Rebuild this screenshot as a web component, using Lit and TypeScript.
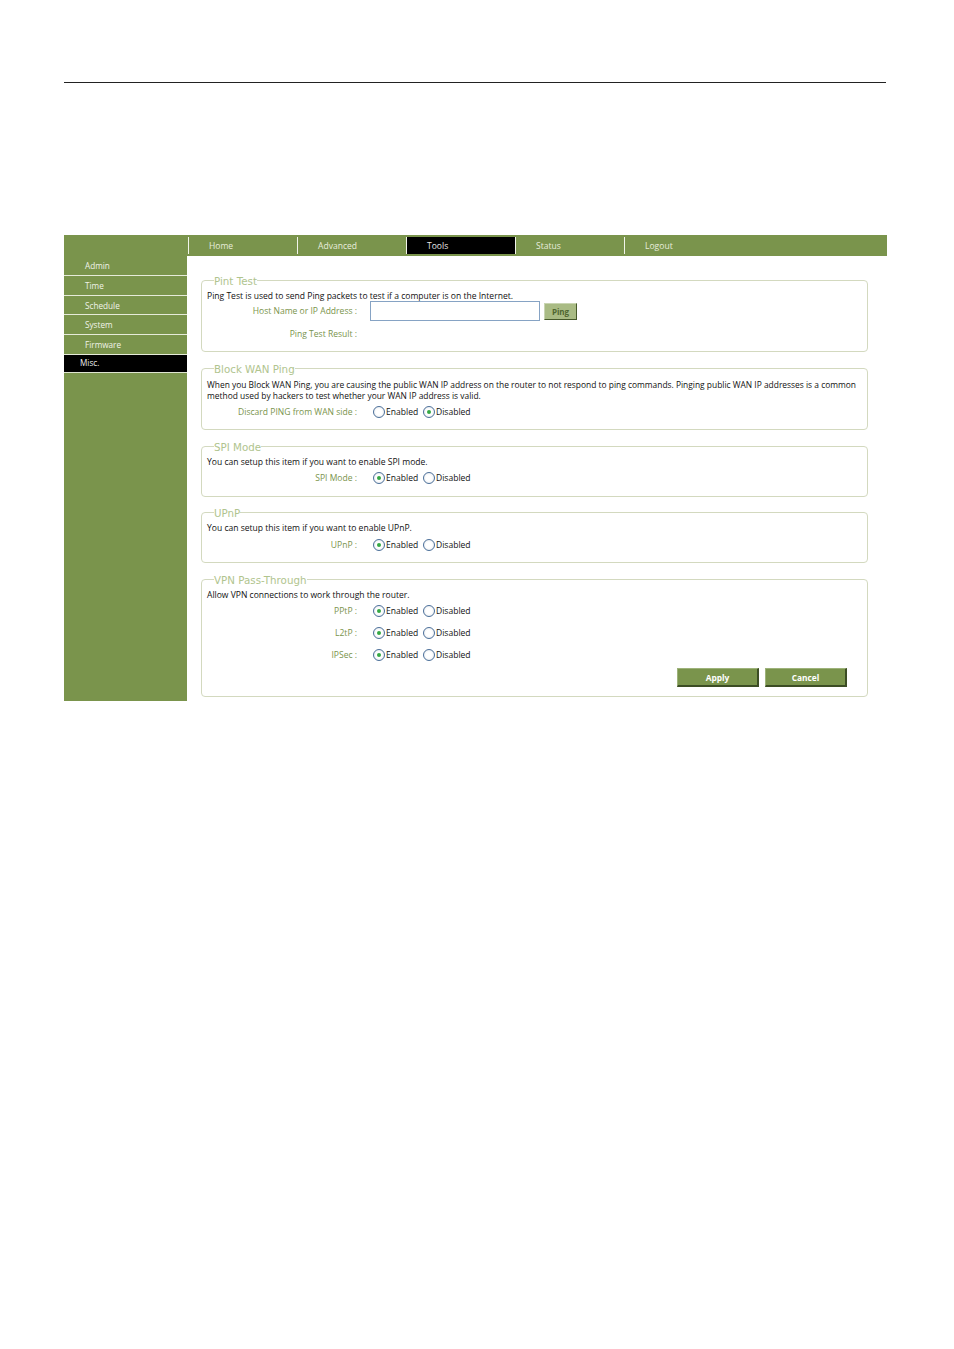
import { LitElement, html, css } from "lit";
import { customElement } from "lit/decorators.js";

const NAV = ["Home", "Advanced", "Tools", "Status", "Logout"];
const SIDE = ["Admin", "Time", "Schedule", "System", "Firmware"];

@customElement("app-root")
export class AppRoot extends LitElement {
  static styles = css`
    :host { display: block; width: 954px; height: 1349px; background: #fff; padding: 82px 0 0 64px; box-sizing: border-box;
      font-family: "Open Sans", "DejaVu Sans", sans-serif; font-size: 8.55px; color: #111; }
    .rule { width: 822px; height: 1px; background: #222; margin-bottom: 152px; }
    .panel { width: 823px; height: 466px; background: #7a944c; display: flex; flex-direction: column; }
    nav { height: 21px; display: flex; padding-left: 124px; box-sizing: border-box; align-items: center; flex: none; }
    .tab { width: 109px; height: 17px; box-sizing: border-box; border-left: 1.5px solid #f1f4ea; padding-left: 20px; line-height: 18px; color: #e8eddc; }
    .tab.on { background: #000; color: #e6e6e6; }
    .body { flex: 1; display: flex; min-height: 0; }
    aside { width: 123px; flex: none; display: flex; flex-direction: column; font-size: 8.2px; }
    .item { height: 19.8px; box-sizing: border-box; border-bottom: 1px solid #e6ebd9; padding-left: 21px; line-height: 20px; color: #f0f3e8; }
    .item.on { background: #000; padding-left: 16px; height: 18px; line-height: 16px; color: #eee; border-bottom-color: #dfe5d0; }
    main { flex: 1; min-width: 0; background: #fff; padding: 17px 19px 0 14px; display: flex; flex-direction: column; gap: 9px; }
    fieldset { margin: 0; padding: 3px 5px 7px; border: 1px solid #d3d9bf; border-radius: 4px; min-width: 0; }
    legend { margin-left: 7px; padding: 2px 0 0; font-family: "DejaVu Sans", sans-serif; font-size: 10.3px; line-height: 13px; color: #b0c48e; }
    .desc { line-height: 11px; white-space: nowrap; }
    .dense { font-size: 8.42px; }
    .row { height: 20px; display: flex; align-items: center; }
    .label { width: 150px; flex: none; text-align: right; color: #7a944c; white-space: nowrap; }
    .opts { display: flex; align-items: center; margin-left: 16px; }
    .opt { display: flex; align-items: center; gap: 1px; width: 50px; }
    .radio { width: 10px; height: 10px; border: 1px solid #4b6f99; border-radius: 50%; flex: none; box-sizing: content-box;
      background: radial-gradient(circle, #fff 40%, #dfe4ea 100%); display: flex; align-items: center; justify-content: center; }
    .radio.on::after { content: ""; width: 4px; height: 4px; border-radius: 50%; background: #35a845; }
    .input { width: 170px; height: 20px; box-sizing: border-box; border: 1px solid #86a3c4; background: #fff; margin-left: 13px; }
    .ping { width: 33px; height: 17px; margin-left: 4px; box-sizing: border-box; background: #a9bb84; border: 1px solid; border-color: #c9d5b2 #46592a #46592a #c9d5b2;
      color: #4f6630; font-weight: bold; font-size: 8px; display: flex; align-items: center; justify-content: center; }
    .gap3 { margin-top: 3px; }
    .gap2 { margin-top: 2px; }
    .gap1 { margin-top: 1px; }
    .up1 { margin-top: -1px; }
    .fa { padding-bottom: 7px; }
    .f3 { padding-bottom: 8px; }
    .f4 { margin-top: -1px; padding-bottom: 7px; }
    .tall { padding-bottom: 9px; }
    .actions { display: flex; justify-content: flex-end; gap: 6px; margin-top: 3px; padding-right: 15px; }
    .btn { width: 82px; height: 19px; box-sizing: border-box; background: #7a944c; border: 1px solid; border-color: #9db27a #3c4d24 #3c4d24 #9db27a;
      border-width: 1px 2px 2px 1px; color: #fff; font-weight: bold; font-size: 8.4px; display: flex; align-items: center; justify-content: center; }
  `;

  private radios(enabled: boolean) {
    return html`<div class="opts">
      <span class="opt"><span class="radio ${enabled ? "on" : ""}"></span>Enabled</span>
      <span class="opt"><span class="radio ${enabled ? "" : "on"}"></span>Disabled</span>
    </div>`;
  }

  private row(label: string, enabled: boolean, cls = "") {
    return html`<div class="row ${cls}"><span class="label">${label} :</span>${this.radios(enabled)}</div>`;
  }

  render() {
    return html`
      <div class="rule"></div>
      <div class="panel">
        <nav>${NAV.map((n) => html`<div class="tab ${n === "Tools" ? "on" : ""}">${n}</div>`)}</nav>
        <div class="body">
          <aside>
            ${SIDE.map((s) => html`<div class="item">${s}</div>`)}
            <div class="item on">Misc.</div>
          </aside>
          <main>
            <fieldset class="fa">
              <legend>Pint Test</legend>
              <div class="desc">Ping Test is used to send Ping packets to test if a computer is on the Internet.</div>
              <div class="row up1"><span class="label">Host Name or IP Address :</span><span class="input"></span><span class="ping">Ping</span></div>
              <div class="row gap3"><span class="label">Ping Test Result :</span></div>
            </fieldset>
            <fieldset>
              <legend>Block WAN Ping</legend>
              <div class="desc dense">When you Block WAN Ping, you are causing the public WAN IP address on the router to not respond to ping commands. Pinging public WAN IP addresses is a common<br />method used by hackers to test whether your WAN IP address is valid.</div>
              ${this.row("Discard PING from WAN side", false, "gap1")}
            </fieldset>
            <fieldset class="f3">
              <legend>SPI Mode</legend>
              <div class="desc">You can setup this item if you want to enable SPI mode.</div>
              ${this.row("SPI Mode", true)}
            </fieldset>
            <fieldset class="f4">
              <legend>UPnP</legend>
              <div class="desc">You can setup this item if you want to enable UPnP.</div>
              ${this.row("UPnP", true, "gap1")}
            </fieldset>
            <fieldset class="tall">
              <legend>VPN Pass-Through</legend>
              <div class="desc">Allow VPN connections to work through the router.</div>
              ${this.row("PPtP", true)}
              ${this.row("L2tP", true, "gap2")}
              ${this.row("IPSec", true, "gap2")}
              <div class="actions"><span class="btn">Apply</span><span class="btn">Cancel</span></div>
            </fieldset>
          </main>
        </div>
      </div>
    `;
  }
}
